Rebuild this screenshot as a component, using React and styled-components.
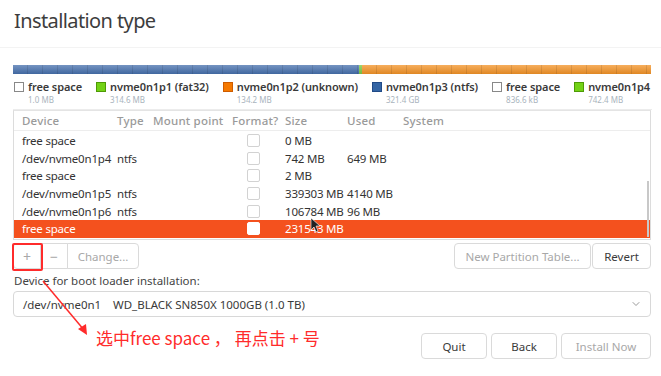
import styled, { createGlobalStyle } from 'styled-components'
import { ChevronDown } from 'lucide-react'

const GlobalStyle = createGlobalStyle`
  html, body { margin: 0; padding: 0; background: #fff; }
  body { font-family: "Noto Sans", "Open Sans", sans-serif; color: #3c3c3c; }
`

const LEGEND = [
    { name: "free space", size: "1.0 MB", fill: "#fff", border: "#888" },
    { name: "nvme0n1p1 (fat32)", size: "314.6 MB", fill: "#73d216", border: "#4e9a06" },
    { name: "nvme0n1p2 (unknown)", size: "134.2 MB", fill: "#f57900", border: "#ce5c00" },
    { name: "nvme0n1p3 (ntfs)", size: "321.4 GB", fill: "#3465a4", border: "#204a87" },
    { name: "free space", size: "836.6 kB", fill: "#fff", border: "#888" },
    { name: "nvme0n1p4", size: "742.4 MB", fill: "#73d216", border: "#4e9a06" },
]

const ROWS = [
    { device: "free space", type: "", size: "0 MB", used: "" },
    { device: "/dev/nvme0n1p4", type: "ntfs", size: "742 MB", used: "649 MB" },
    { device: "free space", type: "", size: "2 MB", used: "" },
    { device: "/dev/nvme0n1p5", type: "ntfs", size: "339303 MB", used: "4140 MB" },
    { device: "/dev/nvme0n1p6", type: "ntfs", size: "106784 MB", used: "96 MB" },
    { device: "free space", type: "", size: "231543 MB", used: "", selected: true },
]

const Page = styled.div`
    position: relative;
    width: 661px;
    height: 376px;
    overflow: hidden;
`
const Header = styled.div`
    box-sizing: border-box;
    padding: 7px 0 0 14px;
    height: 48px;
    border-bottom: 1px solid #f3f3f3;
`
const Title = styled.h1`
    margin: 0;
    font-size: 20px;
    line-height: 28px;
    font-weight: 400;
    color: #3d3d3d;
    letter-spacing: -0.6px;
`
const Body = styled.div`
    padding: 17px 10px 0 13px;
`
const Bar = styled.div`
    display: flex;
    height: 9px;
    width: 638px;
    overflow: hidden;
`
const Segment = styled.div`
    width: ${p => p.w}px;
    flex: ${p => p.grow ? 1 : 'none'};
    background:
        repeating-linear-gradient(90deg, transparent 0 14px, rgba(0,0,0,0.10) 14px 15px),
        linear-gradient(180deg, rgba(255,255,255,0.25), rgba(0,0,0,0.08)),
        ${p => p.color};
`
const Legend = styled.div`
    display: flex;
    gap: 14px;
    width: 638px;
    height: 26px;
    overflow: hidden;
    padding: 5px 0 4px 1px;
    border-bottom: 1px solid #ececec;
    white-space: nowrap;
`
const LegendItem = styled.div`
    display: grid;
    grid-template-columns: 10px auto;
    grid-template-rows: 15px 11px;
    column-gap: 4px;
    align-items: center;
`
const Swatch = styled.span`
    width: 8px;
    height: 8px;
    background: ${p => p.fill};
    border: 1px solid ${p => p.border};
`
const LegendName = styled.span`
    font-size: 11px;
    font-weight: 600;
    color: #3a3a3a;
    line-height: 15px;
    letter-spacing: -0.1px;
`
const LegendSize = styled.span`
    grid-column: 2;
    font-size: 8px;
    color: #a9b4bd;
    line-height: 11px;
`
const Table = styled.div`
    position: relative;
    width: 636px;
    height: 128px;
    border: 1px solid #dcdcdc;
    border-top-color: #e4e4e4;
    font-size: 11.5px;
`
const Row = styled.div`
    display: grid;
    grid-template-columns: 95px 36px 79px 53px 62px 56px 1fr;
    align-items: center;
    padding-left: 8px;
    height: ${p => p.head ? '19px' : '17.6px'};
    color: ${p => p.selected ? '#fff' : p.head ? '#9a9a9a' : '#333'};
    background: ${p => p.selected ? '#f4511e' : 'transparent'};
    border-bottom: ${p => p.head ? '1px solid #ededed' : 'none'};
    margin-bottom: ${p => p.head ? '1px' : '0'};
    letter-spacing: -0.2px;
    white-space: nowrap;
`
const HeadCell = styled.span`
    font-weight: 500;
    letter-spacing: 0.2px;
`
const Check = styled.span`
    display: block;
    margin-left: 15px;
    width: 11px;
    height: 11px;
    border: 1px solid ${p => p.selected ? '#fff' : '#d2d2d2'};
    border-radius: 2px;
    background: #fff;
`
const Scrollbar = styled.div`
    position: absolute;
    right: 1px;
    top: 70px;
    width: 2px;
    height: 56px;
    background: #c8c8c8;
`
const Toolbar = styled.div`
    display: flex;
    justify-content: space-between;
    margin-top: 3px;
    width: 638px;
`
const Group = styled.div`
    display: flex;
`
const Btn = styled.button`
    height: 26px;
    width: ${p => p.w}px;
    padding: 0;
    font-family: inherit;
    font-size: 11.5px;
    color: ${p => p.disabled ? '#a8a8a8' : '#3a3a3a'};
    background: #fff;
    border: 1px solid #dadada;
    border-radius: 4px;
    margin-left: ${p => p.gap || 0}px;
`
const GroupBtn = styled(Btn)`
    border-radius: 0;
    margin-left: -1px;
    font-size: ${p => p.big ? '14px' : '11.5px'};
    &:first-child { border-radius: 4px 0 0 4px; margin-left: 0; }
    &:last-child { border-radius: 0 4px 4px 0; }
`
const Label = styled.div`
    font-size: 11.5px;
    line-height: 15px;
    color: #444;
    margin: 4px 0 0 1px;
    height: 15px;
`
const Combo = styled.div`
    display: flex;
    align-items: center;
    box-sizing: border-box;
    width: 638px;
    height: 26px;
    margin-top: 3px;
    padding: 0 8px 0 9px;
    border: 1px solid #d8d8d8;
    border-radius: 4px;
    font-size: 11.5px;
    color: #3a3a3a;
`
const ComboDev = styled.span`
    width: 90px;
`
const ComboName = styled.span`
    flex: 1;
`
const Footer = styled.div`
    display: flex;
    align-items: center;
    margin-top: 16px;
    width: 638px;
`
const Note = styled.div`
    flex: 1;
    padding-left: 83px;
    margin-top: -16px;
    font-size: 17px;
    line-height: 22px;
    color: #ff2b2b;
    font-family: "Noto Sans CJK SC", "Noto Sans", sans-serif;
    white-space: pre;
`
const Mark = styled.div`
    position: absolute;
    left: 12px;
    top: 243px;
    width: 27px;
    height: 24px;
    border: 2px solid #ff2b2b;
    border-radius: 2px;
`
const Overlay = styled.svg`
    position: absolute;
    left: 0;
    top: 0;
    pointer-events: none;
`

const App = () => {
    return (<Page>
        <GlobalStyle />
        <Header>
            <Title>Installation type</Title>
        </Header>
        <Body>
            <Bar>
                <Segment w={346} color="#4670ad" />
                <Segment w={3} color="#7ac943" />
                <Segment grow color="#f39327" />
            </Bar>
            <Legend>
                {LEGEND.map((item, index) => (
                    <LegendItem key={index}>
                        <Swatch fill={item.fill} border={item.border} />
                        <LegendName>{item.name}</LegendName>
                        <LegendSize>{item.size}</LegendSize>
                    </LegendItem>
                ))}
            </Legend>
            <Table>
                <Row head>
                    <HeadCell>Device</HeadCell>
                    <HeadCell>Type</HeadCell>
                    <HeadCell>Mount point</HeadCell>
                    <HeadCell>Format?</HeadCell>
                    <HeadCell>Size</HeadCell>
                    <HeadCell>Used</HeadCell>
                    <HeadCell>System</HeadCell>
                </Row>
                {ROWS.map((row, index) => (
                    <Row key={index} selected={row.selected}>
                        <span>{row.device}</span>
                        <span>{row.type}</span>
                        <span></span>
                        <Check selected={row.selected} />
                        <span>{row.size}</span>
                        <span>{row.used}</span>
                        <span></span>
                    </Row>
                ))}
                <Scrollbar />
            </Table>
            <Toolbar>
                <Group>
                    <GroupBtn w={28} big disabled>+</GroupBtn>
                    <GroupBtn w={28} big disabled>−</GroupBtn>
                    <GroupBtn w={72} disabled>Change...</GroupBtn>
                </Group>
                <Group>
                    <Btn w={137} disabled>New Partition Table...</Btn>
                    <Btn w={59} gap={1}>Revert</Btn>
                </Group>
            </Toolbar>
            <Label>Device for boot loader installation:</Label>
            <Combo>
                <ComboDev>/dev/nvme0n1</ComboDev>
                <ComboName>WD_BLACK SN850X 1000GB (1.0 TB)</ComboName>
                <ChevronDown size={12} color="#777" strokeWidth={1.5} />
            </Combo>
            <Footer>
                <Note>{"选中free space ， 再点击 + 号"}</Note>
                <Btn w={66}>Quit</Btn>
                <Btn w={66} gap={4}>Back</Btn>
                <Btn w={90} gap={4} disabled>Install Now</Btn>
            </Footer>
        </Body>
        <Mark />
        <Overlay width="661" height="376">
            <line x1="43" y1="281" x2="84" y2="330" stroke="#ff2b2b" strokeWidth="1.5" />
            <path d="M87 335 L78 329 L86 324 Z" fill="#ff2b2b" />
            <path d="M311 218 L311 230 L314 227 L316 232 L318 231 L316 226 L320 226 Z" fill="#222" stroke="#fff" strokeWidth="0.6" />
        </Overlay>
    </Page>
    )
}

export default App
